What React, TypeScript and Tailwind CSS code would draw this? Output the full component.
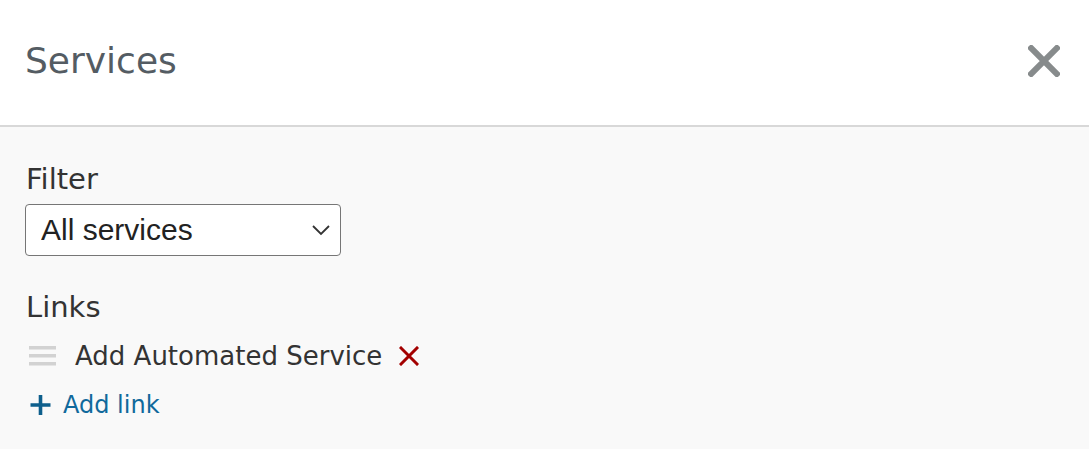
import React from 'react';

const Hamburger = () => (
  <svg width="27" height="20" viewBox="0 0 27 20" className="shrink-0">
    <rect x="0" y="0" width="27" height="3.5" fill="#d2d2d2" />
    <rect x="0" y="8" width="27" height="3.5" fill="#d2d2d2" />
    <rect x="0" y="16" width="27" height="3.5" fill="#d2d2d2" />
  </svg>
);

const Cross = ({ size, color, stroke }: { size: number; color: string; stroke: number }) => (
  <svg width={size} height={size} viewBox="0 0 20 20">
    <path d="M2 2L18 18M18 2L2 18" stroke={color} strokeWidth={stroke} strokeLinecap="square" />
  </svg>
);

const App: React.FC = () => {
  return (
    <div className="w-[1089px] h-[449px] bg-[#f9f9f9] font-['DejaVu_Sans',sans-serif] overflow-hidden">
      {/* Header */}
      <div className="h-[127px] bg-white border-b-2 border-[#d8d8d8] flex items-center justify-between pl-[25px] pr-[29px] pb-[4px]">
        <h1 className="text-[36px] leading-[42px] text-[#545c63]">Services</h1>
        <button className="w-[32px] h-[32px] flex items-center justify-center">
          <Cross size={32} color="#878b8c" stroke={3.8} />
        </button>
      </div>

      {/* Body */}
      <div className="px-[26px] pt-[35px]">
        <label className="block text-[29px] leading-[34px] text-[#333333]">Filter</label>
        <div className="relative mt-[8px] w-[316px] -ml-[1px]">
          <select className="appearance-none w-full h-[52px] bg-white border border-[#767676] rounded-[4px] pl-[15px] pb-[2px] text-[30px] text-[#222222] font-['Liberation_Sans',Arial,sans-serif] outline-none">
            <option>All services</option>
          </select>
          <svg
            width="18"
            height="11"
            viewBox="0 0 18 11"
            className="absolute right-[11px] top-[21px] pointer-events-none"
          >
            <path d="M1 1L9 9L17 1" stroke="#333" strokeWidth="1.8" fill="none" />
          </svg>
        </div>

        <div className="mt-[34px] text-[29px] leading-[34px] text-[#333333]">Links</div>

        <div className="mt-[16px] flex items-center h-[32px]">
          <div className="ml-[3px]">
            <Hamburger />
          </div>
          <span className="ml-[19px] text-[26px] leading-[32px] text-[#333333]">Add Automated Service</span>
          <button className="ml-[17px] flex items-center">
            <Cross size={20} color="#a30000" stroke={3} />
          </button>
        </div>

        <button className="mt-[18px] flex items-center h-[30px] text-[#10699c]">
          <svg width="21" height="20" viewBox="0 0 21 20" className="ml-[4px]">
            <path d="M10.5 0V20M0.5 10H20.5" stroke="#0e5f8c" strokeWidth="3.6" />
          </svg>
          <span className="ml-[12px] text-[24px] leading-[30px]">Add link</span>
        </button>
      </div>
    </div>
  );
};

export default App;
